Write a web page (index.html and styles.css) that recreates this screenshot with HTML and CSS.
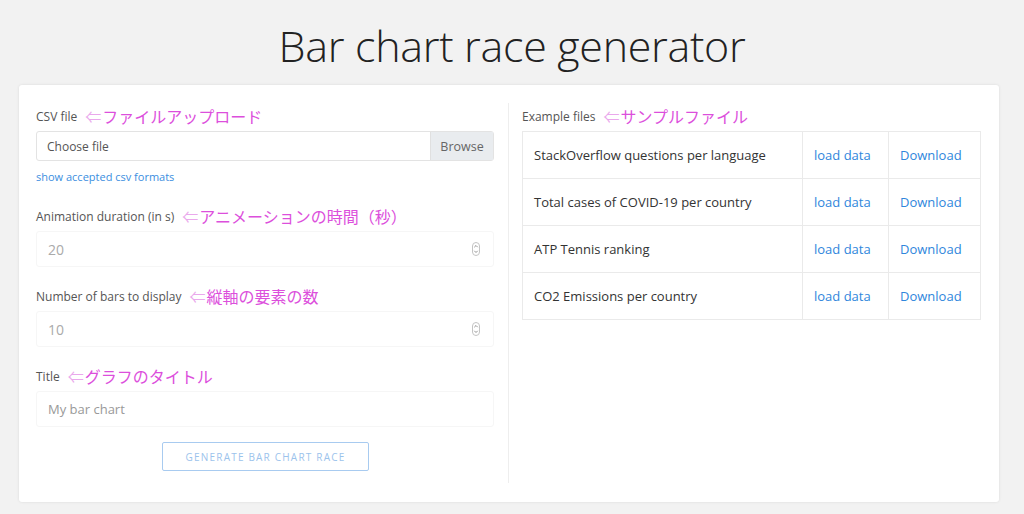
FILE: index.html
```html
<!DOCTYPE html>
<html lang="en">
<head>
<meta charset="utf-8">
<title>Bar chart race generator</title>
<link rel="stylesheet" href="styles.css">
</head>
<body>
<h1 class="page-title">Bar chart race generator</h1>
<main class="card">
  <section class="col col-left">
    <div class="field">
      <div class="label-row"><span class="label">CSV file</span><span class="note"><span class="arrow">⇐</span>ファイルアップロード</span></div>
      <div class="file-input">
        <span class="file-name">Choose file</span>
        <span class="file-btn">Browse</span>
      </div>
      <a class="help-link" href="#">show accepted csv formats</a>
    </div>
    <div class="field">
      <div class="label-row"><span class="label">Animation duration (in s)</span><span class="note"><span class="arrow">⇐</span>アニメーションの時間（秒）</span></div>
      <div class="num-input"><span class="value">20</span><span class="spin"><svg width="8" height="14" viewBox="0 0 8 14"><rect x="0.5" y="0.5" width="7" height="13" rx="3.5" fill="none" stroke="#c4c4c4"/><path d="M2.3 5.2 L4 3.5 L5.7 5.2 M2.3 8.8 L4 10.5 L5.7 8.8" fill="none" stroke="#888" stroke-width="0.9"/></svg></span></div>
    </div>
    <div class="field">
      <div class="label-row"><span class="label">Number of bars to display</span><span class="note"><span class="arrow">⇐</span>縦軸の要素の数</span></div>
      <div class="num-input"><span class="value">10</span><span class="spin"><svg width="8" height="14" viewBox="0 0 8 14"><rect x="0.5" y="0.5" width="7" height="13" rx="3.5" fill="none" stroke="#c4c4c4"/><path d="M2.3 5.2 L4 3.5 L5.7 5.2 M2.3 8.8 L4 10.5 L5.7 8.8" fill="none" stroke="#888" stroke-width="0.9"/></svg></span></div>
    </div>
    <div class="field">
      <div class="label-row"><span class="label">Title</span><span class="note"><span class="arrow">⇐</span>グラフのタイトル</span></div>
      <div class="text-input"><span class="placeholder">My bar chart</span></div>
    </div>
    <div class="actions">
      <button class="gen-btn" type="button">Generate bar chart race</button>
    </div>
  </section>
  <section class="col col-right">
    <div class="label-row"><span class="label">Example files</span><span class="note"><span class="arrow">⇐</span>サンプルファイル</span></div>
    <table class="examples">
      <tr><td class="name">StackOverflow questions per language</td><td class="act"><a href="#">load data</a></td><td class="act"><a href="#">Download</a></td></tr>
      <tr><td class="name">Total cases of COVID-19 per country</td><td class="act"><a href="#">load data</a></td><td class="act"><a href="#">Download</a></td></tr>
      <tr><td class="name">ATP Tennis ranking</td><td class="act"><a href="#">load data</a></td><td class="act"><a href="#">Download</a></td></tr>
      <tr><td class="name">CO2 Emissions per country</td><td class="act"><a href="#">load data</a></td><td class="act"><a href="#">Download</a></td></tr>
    </table>
  </section>
</main>
</body>
</html>
```
FILE: styles.css
```css
* { box-sizing: border-box; }
html, body { margin: 0; padding: 0; }
body {
  background: #f2f2f2;
  font-family: "Open Sans", "Noto Sans CJK JP", sans-serif;
  color: #333;
  width: 1024px;
  height: 514px;
  overflow: hidden;
}
.page-title {
  margin: 0;
  padding-top: 19px;
  height: 85px;
  text-align: center;
  font-weight: 300;
  font-size: 43px;
  line-height: 54px;
  color: #222;
  letter-spacing: -0.3px;
}
.card {
  margin: 0 25px 0 19px;
  background: #fff;
  border-radius: 3px;
  box-shadow: 0 0 3px rgba(0,0,0,0.10);
  display: flex;
  padding: 18px 17px 19px 17px;
  height: 417px;
}
.col-left {
  width: 473px;
  padding-right: 14px;
  border-right: 1px solid #eee;
}
.col-right {
  width: 472px;
  padding-left: 13px;
}
.label-row {
  display: flex;
  align-items: center;
  height: 26px;
}
.label {
  font-size: 12px;
  color: #555;
}
.note {
  font-family: "Noto Sans CJK JP", sans-serif;
  font-size: 16px;
  color: #dc4fdc;
  margin-left: 8px;
  display: flex;
  align-items: center;
}
.arrow {
  font-family: "Noto Sans CJK JP", sans-serif;
  font-size: 16px;
  color: #eaa8ec;
  margin-right: 1px;
}
.file-input {
  margin-top: 2px;
  height: 30px;
  border: 1px solid #e3e3e3;
  border-radius: 3px;
  display: flex;
  align-items: stretch;
  font-size: 12px;
}
.file-name {
  flex: 1;
  padding-left: 10px;
  display: flex;
  align-items: center;
  color: #555;
}
.file-btn {
  width: 63px;
  background: #e9ecef;
  border-left: 1px solid #e0e0e0;
  color: #666;
  font-size: 12.5px;
  display: flex;
  align-items: center;
  justify-content: center;
}
.help-link {
  display: block;
  margin-top: 8px;
  margin-bottom: 19px;
  font-size: 11px;
  color: #3b8ee0;
  text-decoration: none;
}
.num-input, .text-input {
  margin-top: 2px;
  height: 36px;
  border: 1px solid #f6f6f6;
  border-radius: 3px;
  display: flex;
  align-items: center;
  padding: 0 13px 0 11px;
  font-size: 14px;
  margin-bottom: 16px;
}
.value { flex: 1; color: #aaa; }
.placeholder { color: #999; font-size: 13px; }
.spin { display: flex; align-items: center; }
.actions {
  display: flex;
  justify-content: center;
  margin-top: -1px;
}
.gen-btn {
  width: 207px;
  height: 29px;
  background: #fff;
  border: 1px solid #a8cbf0;
  border-radius: 2px;
  color: #9cc3ec;
  font-family: "Open Sans", sans-serif;
  font-size: 10px;
  letter-spacing: 1.2px;
  text-transform: uppercase;
  margin-left: 1px;
}
.examples {
  margin-top: 2px;
  width: 459px;
  border-collapse: collapse;
  font-size: 13px;
}
.examples td {
  border: 1px solid #eaeaea;
  height: 47px;
  padding: 0 11px;
}
.examples td.name { width: 280px; color: #333; }
.examples td.act:nth-child(2) { width: 86px; }
.examples a { color: #2f86dc; text-decoration: none; }
```
